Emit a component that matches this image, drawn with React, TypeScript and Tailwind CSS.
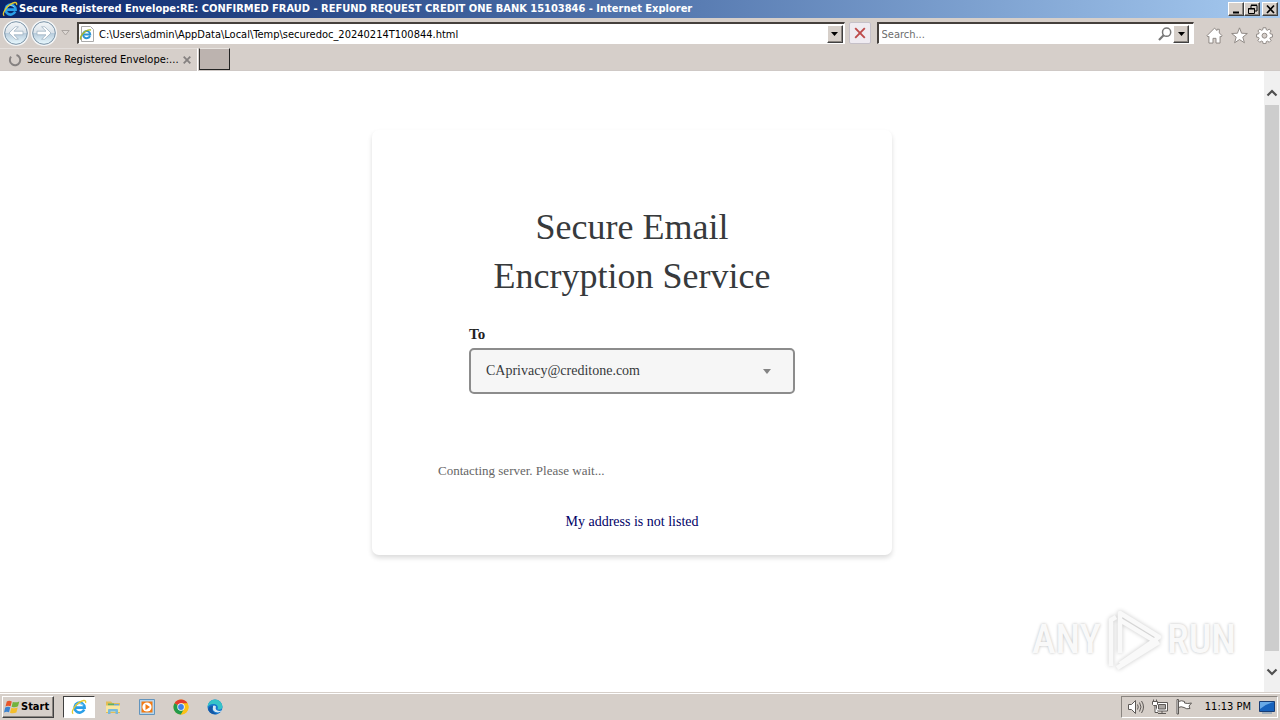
import { ReactNode } from "react";
import clsx from "clsx";

const uiFont = "font-['DejaVu_Sans_Condensed','DejaVu_Sans',sans-serif]";
const raised =
  "border border-t-white border-l-white border-r-[#404040] border-b-[#404040] bg-[#d6cfc9] shadow-[inset_-1px_-1px_0_#8a8580]";
const field =
  "flex h-[22px] items-center border-t-2 border-l-2 border-t-[#45403c] border-l-[#45403c] border-b border-b-white border-r border-r-white bg-white";

function IeIcon({ className }: { className?: string }) {
  return (
    <svg viewBox="0 0 16 16" className={clsx("shrink-0", className)}>
      <path
        d="M13.2 10.6A5 5 0 1 1 13.6 8.6H4.4"
        fill="none"
        stroke="#2a9fe8"
        strokeWidth="2.6"
      />
      <path d="M4 6.5Q8 2.500 12.500 6" fill="none" stroke="#7fd2fa" strokeWidth="1" />
      <path
        d="M2.3 14.7C-.4 13.8 3 7.2 7.6 3.9 11.3 1.2 15.4.2 14.6 4"
        fill="none"
        stroke="#e5c92f"
        strokeWidth="1.3"
      />
    </svg>
  );
}

function NavButton({ label, flip }: { label: string; flip?: boolean }) {
  return (
    <button aria-label={label} className="size-[26px] shrink-0">
      <svg viewBox="0 0 26 26" className={clsx("size-full", flip && "-scale-x-100")}>
        <defs>
          <linearGradient id="nav" x2="0" y2="1">
            <stop stopColor="#f3f6f8" />
            <stop offset=".48" stopColor="#dbe3ea" />
            <stop offset=".5" stopColor="#b6cada" />
            <stop offset="1" stopColor="#eafaff" />
          </linearGradient>
        </defs>
        <circle cx="13" cy="13" r="13" fill="#f5f7f8" />
        <circle cx="13" cy="13" r="11.3" fill="url(#nav)" stroke="#7992a6" />
        <path
          d="M6 13l6.3-6.2h3.1L11 11.2h9v3.6h-9l4.4 4.4h-3.1z"
          fill="#fff"
          stroke="#a0b3c2"
          strokeWidth=".8"
        />
      </svg>
    </button>
  );
}

function DropButton({ label }: { label: string }) {
  return (
    <button
      aria-label={label}
      className={clsx("flex h-[18px] w-4 shrink-0 items-center justify-center", raised)}
    >
      <svg viewBox="0 0 7 4" className="h-1 w-[7px]">
        <path d="M0 0h7L3.5 4z" fill="#000" />
      </svg>
    </button>
  );
}

function WindowButton({ label, children }: { label: string; children: ReactNode }) {
  return (
    <button
      aria-label={label}
      className={clsx("flex h-3.5 w-4 shrink-0 items-center justify-center", raised)}
    >
      <svg viewBox="0 0 13 12" className="h-3 w-[13px]">
        {children}
      </svg>
    </button>
  );
}

function TitleBar() {
  return (
    <header className="flex h-[18px] shrink-0 items-center bg-linear-to-r from-[#0a246a] to-[#a6caf0] px-0.5">
      <IeIcon className="size-4" />
      <h1 className="min-w-0 flex-1 truncate pl-px text-[11px] leading-[18px] font-bold text-white">
        Secure Registered Envelope:RE: CONFIRMED FRAUD - REFUND REQUEST CREDIT
        ONE BANK 15103846 - Internet Explorer
      </h1>
      <WindowButton label="Minimize">
        <path d="M3 8.5h6v2H3z" fill="#000" />
      </WindowButton>
      <WindowButton label="Restore">
        <path
          d="M5 5V2.5h6V8H9M5 2h6M2.5 5.5h6v5h-6zM2 6h7"
          fill="none"
          stroke="#000"
        />
      </WindowButton>
      <div className="w-0.5" />
      <WindowButton label="Close">
        <path d="M3 2.5l7 7.5M10 2.5L3 10" stroke="#000" strokeWidth="1.7" />
      </WindowButton>
    </header>
  );
}

function Toolbar() {
  return (
    <div className="flex h-[30px] shrink-0 items-center pr-[7px] pl-[3px]">
      <NavButton label="Back" />
      <div className="w-0.5" />
      <NavButton label="Forward" flip />
      <button aria-label="Recent pages" className="flex w-5 justify-center pr-1">
        <svg viewBox="0 0 9 6" className="h-1.5 w-[9px]">
          <path d="M.8.5h7.4L4.5 5z" fill="#ddd8d4" stroke="#aaa4a0" />
        </svg>
      </button>
      <div className={clsx("min-w-0 flex-1 pr-px", field)}>
        <svg viewBox="0 0 16 16" className="size-4 shrink-0">
          <path d="M2.5.5h9l3 3v12h-12z" fill="#fff" stroke="#aaa" />
          <path
            d="M11 9.8A3.6 3.6 0 1 1 11.2 8.4H4.5"
            fill="none"
            stroke="#2b93d4"
            strokeWidth="2"
          />
          <path
            d="M2 13.5C0 11 6 3 12 4"
            fill="none"
            stroke="#a9b82d"
            strokeWidth="1.4"
          />
        </svg>
        <input
          aria-label="Address"
          readOnly
          value="C:\Users\admin\AppData\Local\Temp\securedoc_20240214T100844.html"
          className="h-[18px] min-w-0 flex-1 pt-0.5 pl-1 text-[11px] text-black outline-none"
        />
        <DropButton label="Show address history" />
      </div>
      <button
        aria-label="Stop"
        className="mx-1 flex size-[22px] shrink-0 items-center justify-center rounded-xs border border-[#c5c0c8] bg-[#efebf1]"
      >
        <svg viewBox="0 0 12 12" className="size-3">
          <path d="M1.2 1.2l9.6 9.6M10.8 1.2L1.2 10.8" stroke="#bd4a4a" strokeWidth="1.9" />
        </svg>
      </button>
      <div className={clsx("ml-0.5 w-1/4 pr-1", field)}>
        <input
          aria-label="Search"
          placeholder="Search..."
          className="h-[18px] min-w-0 flex-1 pt-0.5 pl-[3px] text-[11px] outline-none placeholder:text-[#6d6d6d]"
        />
        <button aria-label="Go" className="mr-px size-3.5 shrink-0">
          <svg viewBox="0 0 14 14" className="size-full">
            <circle cx="8.6" cy="5.2" r="4.1" fill="none" stroke="#777" strokeWidth="1.5" />
            <path d="M5.6 8.2L1 13" stroke="#777" strokeWidth="2.2" />
          </svg>
        </button>
        <DropButton label="Search providers" />
      </div>
      <div className="ml-3 flex shrink-0 gap-2 pt-1">
        <button aria-label="Home" className="size-[17px]">
          <svg viewBox="0 0 18 18" className="size-full">
            <path
              d="M9 1.2L.9 9.3l1.3 1.2.9-.7v7.2h4.3v-5h3.2v5h4.3V9.8l.9.7 1.3-1.2-3-3V2.4h-2.4v1.4z"
              fill="#fff"
              stroke="#8b8581"
            />
          </svg>
        </button>
        <button aria-label="Favorites" className="size-[17px]">
          <svg viewBox="0 0 18 18" className="size-full">
            <path
              d="M9 .9l2.2 5.7 6.1.3-4.8 3.8 1.7 6L9 13.3l-5.2 3.4 1.7-6L.7 6.9l6.1-.3z"
              fill="#fff"
              stroke="#8b8581"
            />
          </svg>
        </button>
        <button aria-label="Tools" className="size-[17px]">
          <svg viewBox="0 0 18 18" className="size-full">
            <path
              d="M7.5.8h3l.4 2.2 1.3.5L14 2.2l2 2-1.3 1.8.5 1.3 2.2.4v3l-2.2.4-.5 1.3 1.3 1.8-2 2-1.8-1.3-1.3.5-.4 2.2h-3l-.4-2.2-1.3-.5L4 16.2l-2-2 1.3-1.8-.5-1.3-2.2-.4v-3l2.2-.4.5-1.3L2 4.2l2-2 1.8 1.3 1.3-.5z"
              fill="#fff"
              stroke="#8b8581"
            />
            <circle cx="9" cy="9.2" r="2.6" fill="#d6cfca" stroke="#8b8581" />
          </svg>
        </button>
      </div>
    </div>
  );
}

function TabBar() {
  return (
    <div className="flex h-[23px] shrink-0 items-start border-b border-[#cfc9c6]">
      <div className="flex h-[23px] w-[198px] items-center border-t border-r border-t-[#e4dfdc] border-r-white pl-2">
        <svg viewBox="0 0 14 14" className="size-3.5 shrink-0">
          <path
            d="M8.5 2A5.2 5.2 0 1 1 3 3.7"
            fill="none"
            stroke="#858180"
            strokeWidth="2"
          />
        </svg>
        <span className="w-[156px] shrink-0 pl-[5px] text-[11px] leading-4 whitespace-nowrap text-black">
          Secure Registered Envelope:...
        </span>
        <button aria-label="Close tab" className="ml-[5px] size-2 shrink-0">
          <svg viewBox="0 0 8 8" className="size-full">
            <path d="M.7.7l6.6 6.600M7.3.7L.7 7.3" stroke="#858180" strokeWidth="1.8" />
          </svg>
        </button>
      </div>
      <button
        aria-label="New tab"
        className="ml-px h-[22px] w-[31px] border border-t-[#e8e4e0] border-r-[#222] border-b-[#222] border-l-[#333] bg-[#bcb3af]"
      />
    </div>
  );
}

function Scrollbar() {
  return (
    <div className="flex w-4 shrink-0 flex-col items-center bg-[#f0f0f0] pt-3.5">
      <button aria-label="Scroll up" className="flex h-5 w-full items-start justify-center pt-1">
        <svg viewBox="0 0 12 8" className="h-2 w-3">
          <path d="M1.5 6.5L6 2l4.5 4.5" fill="none" stroke="#505050" strokeWidth="2.2" />
        </svg>
      </button>
      <div className="w-3.5 flex-1 bg-[#cdcdcd]" />
      <button aria-label="Scroll down" className="flex h-[41px] w-full items-center justify-center">
        <svg viewBox="0 0 12 8" className="h-2 w-3">
          <path d="M1.5 1.5L6 6l4.5-4.5" fill="none" stroke="#505050" strokeWidth="2.2" />
        </svg>
      </button>
    </div>
  );
}

function Watermark() {
  return (
    <div className="pointer-events-none absolute right-7 bottom-5 flex items-center gap-1 font-['Roboto_Condensed','Liberation_Sans_Narrow','Liberation_Sans',sans-serif] text-[40px] leading-none font-medium text-[#f9f9f9] [text-shadow:0_0_3px_#bbb]">
      <span>ANY</span>
      <svg viewBox="0 0 58 64" className="h-16 w-[58px] drop-shadow-[0_0_2px_#c8c8c8]">
        <path
          d="M15 45V5l39 24-39 27M15 12l33 20M6 58V12l5-3M12 60l42-26"
          fill="none"
          stroke="#f9f9f9"
          strokeWidth="4.5"
          strokeLinejoin="round"
        />
      </svg>
      <span>RUN</span>
    </div>
  );
}

function EnvelopeCard() {
  return (
    <section className="w-full max-w-[520px] rounded-[7px] bg-white px-[66px] pt-[73px] pb-[23px] text-[14px] shadow-[0_3px_5px_rgba(0,0,0,0.14)]">
      <h2 className="text-center text-[36px] leading-[49px] text-[#373a3c]">
        Secure Email
        <br />
        Encryption Service
      </h2>
      <div className="mt-[23px] px-[31px]">
        <label
          htmlFor="recipient"
          className="block text-[15px] leading-5 font-bold text-[#222]"
        >
          To
        </label>
        <div className="relative mt-1">
          <select
            id="recipient"
            className="h-[46px] w-full appearance-none rounded-[5px] border-2 border-[#8c8c8c] bg-[#f6f6f6] px-[15px] pb-0.5 text-[#373a3c]"
          >
            <option>CAprivacy@creditone.com</option>
          </select>
          <svg
            viewBox="0 0 8 5"
            className="pointer-events-none absolute top-[21px] right-6 h-[5px] w-2"
          >
            <path d="M0 0h8L4 5z" fill="#848484" />
          </svg>
        </div>
      </div>
      <p className="mt-[67px] text-[13px] leading-5 text-[#666]">
        Contacting server. Please wait...
      </p>
      <p className="mt-[31px] text-center leading-5">
        <a href="#" className="text-[#000066]">
          My address is not listed
        </a>
      </p>
    </section>
  );
}

function TaskButton({ label, children }: { label: string; children: ReactNode }) {
  return (
    <button aria-label={label} className="flex w-[34px] justify-center">
      <svg viewBox="0 0 16 16" className="size-4">
        {children}
      </svg>
    </button>
  );
}

function Taskbar() {
  return (
    <footer className="flex h-7 shrink-0 items-center border-t border-[#d6cfc9] bg-[#d6cfc9] px-0.5 pt-px shadow-[inset_0_1px_0_#fff]">
      <button
        className={clsx(
          "flex h-[22px] w-[52px] shrink-0 items-center gap-px pl-px text-[11px] font-bold text-black",
          raised,
        )}
      >
        <svg viewBox="0 0 16 16" className="size-4 shrink-0">
          <path d="M2.8 2.5Q5 1 7.8 2.4L6.6 7.3Q4 6 1.5 7.4z" fill="#e8562a" />
          <path d="M8.8 2.9Q12 4 15.3 2.4L14 7.3Q11 9 7.6 7.7z" fill="#72b33c" />
          <path d="M1.2 8.5Q4 7.1 6.3 8.3L5 13.3Q3 12 0 13.4z" fill="#3c83d0" />
          <path d="M7.4 8.7Q10.5 10 13.7 8.5L12.4 13.5Q9 15 6 13.7z" fill="#f4be2c" />
        </svg>
        Start
      </button>
      <button
        aria-label="Internet Explorer"
        className="mr-px ml-[9px] flex h-[22px] w-8 items-center justify-center border border-t-[#404040] border-r-white border-b-white border-l-[#404040] bg-white"
      >
        <IeIcon className="size-4" />
      </button>
      <TaskButton label="File Explorer">
        <path d="M1 2.500h5L7.500 4H15v10H1z" fill="#e3bd55" />
        <path d="M3 4.500h6v2H3z" fill="#5fae68" />
        <path d="M9 5h5v2H9z" fill="#6fa9d8" />
        <path d="M1 6.5h14V13H1z" fill="#f8e6a0" />
        <path d="M3 15v-4q0-1 1-1h8q1 0 1 1v4h-2.5v-2.5h-5V15z" fill="#77b9dc" />
      </TaskButton>
      <TaskButton label="Media Player">
        <path d="M.5.5h15v15H.5z" fill="#b5d6ee" stroke="#6294bd" />
        <path d="M2.500 2.500h11v11h-11z" fill="#f27a13" />
        <circle cx="8" cy="8" r="4.6" fill="#fff" />
        <path d="M6.500 5L11 8 6.500 11z" fill="#f27a13" />
      </TaskButton>
      <TaskButton label="Chrome">
        <circle cx="8" cy="8" r="7.5" fill="#fbc116" />
        <path d="M8 8L1.500 4.250A7.500 7.500 0 0 1 14.500 4.250z" fill="#e33b2e" />
        <path d="M8 8L1.500 4.250A7.500 7.500 0 0 0 8 15.500L11 10z" fill="#229a4a" />
        <path d="M8 4.250h6.500A7.500 7.500 0 0 1 8 15.500L11.250 9.900z" fill="#fbc116" />
        <circle cx="8" cy="8" r="3.7" fill="#fff" />
        <circle cx="8" cy="8" r="2.9" fill="#4081e8" />
      </TaskButton>
      <TaskButton label="Edge">
        <circle cx="8" cy="8" r="7.5" fill="#1576cc" />
        <path d="M.5 8A7.5 7.5 0 0 1 15.5 8Q15 11 10.5 10.5 12 6 7.5 5 3 4.5.5 8z" fill="#35c3c8" />
        <path d="M6 7Q4.5 13 11 13.5 14 13 15 11.5 12 12.5 9.5 11 8 9.5 9 7.5 7 6 6 7z" fill="#d6e8f3" />
        <path d="M6 7Q3.5 13 10 15.2 4 16 1.3 11 1 7 6 7z" fill="#1657a4" />
      </TaskButton>
      <div className="flex-1" />
      <div className="flex h-[22px] items-center border border-t-[#8a8580] border-r-white border-b-white border-l-[#8a8580] pr-0.5 pl-1.5 text-[11px] text-black">
        <button aria-label="Volume" className="mr-2 size-4">
          <svg viewBox="0 0 16 16" className="size-full" fill="none" stroke="#5d5956">
            <path d="M.5 5.5h3l4-4v13l-4-4h-3z" fill="#fff" />
            <path d="M9.5 5.5q1.5 2.5 0 5M11.5 3.5q3 4.5 0 9M13.5 2q4 6 0 12" />
          </svg>
        </button>
        <button aria-label="Network" className="mr-2 size-4">
          <svg viewBox="0 0 16 16" className="size-full" fill="none" stroke="#5d5956">
            <path d="M4.5 3.5h11v8.5h-11z" fill="#fff" />
            <path d="M6.5 5.5h7V10h-7z" fill="#a9a5a2" />
            <path d="M6 14.5h8M10 12v2.5" />
            <path d="M.5 2.5h5v3l-1 1h-3l-1-1zM1.5.5v2M4.5.5v2M3 6.5v7h3" fill="#fff" />
          </svg>
        </button>
        <button aria-label="Action Center" className="mr-[13px] size-4">
          <svg viewBox="0 0 16 16" className="size-full" fill="#fff" stroke="#5d5956">
            <path d="M1 .5h1.5V15H1zM2.5 2.5q3-1.5 6 0V4q3 1 7 0L13 7l1 2.5q-3.5 1-6-1-3-1.5-5.5 0z" />
          </svg>
        </button>
        <time className="leading-5">11:13 PM</time>
        <button aria-label="Show desktop" className="ml-2 size-4">
          <svg viewBox="0 0 16 16" className="size-full">
            <path d="M.5 2.5h15v10H.5z" fill="#1762bd" stroke="#183c74" />
            <path d="M1 3h14Q8 4 1 10z" fill="#68a9e7" />
            <path d="M3 14h10" stroke="#6d8eaf" />
          </svg>
        </button>
      </div>
    </footer>
  );
}

function App() {
  return (
    <div className={clsx("flex h-screen flex-col overflow-hidden bg-[#d6cfca]", uiFont)}>
      <TitleBar />
      <Toolbar />
      <TabBar />
      <div className="flex min-h-0 flex-1 bg-white">
        <main className="relative flex min-w-0 flex-1 items-start justify-center overflow-hidden pt-[59px] font-['Liberation_Serif',serif]">
          <EnvelopeCard />
          <Watermark />
        </main>
        <Scrollbar />
      </div>
      <Taskbar />
    </div>
  );
}

export default App;
